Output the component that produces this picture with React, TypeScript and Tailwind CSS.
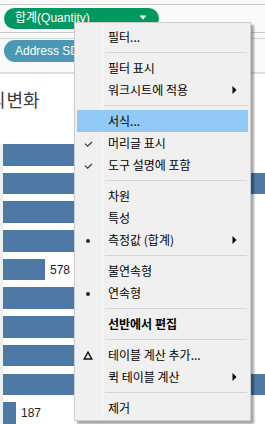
import React from "react";

type Item =
  | { kind: "sep" }
  | {
      kind: "item";
      label: string;
      icon?: "check" | "dot" | "delta";
      sub?: boolean;
      bold?: boolean;
      active?: boolean;
    };

const items: Item[] = [
  { kind: "item", label: "필터..." },
  { kind: "sep" },
  { kind: "item", label: "필터 표시" },
  { kind: "item", label: "워크시트에 적용", sub: true },
  { kind: "sep" },
  { kind: "item", label: "서식...", active: true },
  { kind: "item", label: "머리글 표시", icon: "check" },
  { kind: "item", label: "도구 설명에 포함", icon: "check" },
  { kind: "sep" },
  { kind: "item", label: "차원" },
  { kind: "item", label: "특성" },
  { kind: "item", label: "측정값 (합계)", icon: "dot", sub: true },
  { kind: "sep" },
  { kind: "item", label: "불연속형" },
  { kind: "item", label: "연속형", icon: "dot" },
  { kind: "sep" },
  { kind: "item", label: "선반에서 편집", bold: true },
  { kind: "sep" },
  { kind: "item", label: "테이블 계산 추가...", icon: "delta" },
  { kind: "item", label: "퀵 테이블 계산", sub: true },
  { kind: "sep" },
  { kind: "item", label: "제거" },
];

const bars: { w: number; label?: string }[] = [
  { w: 150 },
  { w: 300 },
  { w: 200 },
  { w: 220 },
  { w: 42, label: "578" },
  { w: 180 },
  { w: 160 },
  { w: 190 },
  { w: 300 },
  { w: 13, label: "187" },
];

function Icon({ kind }: { kind?: "check" | "dot" | "delta" }) {
  if (kind === "check")
    return (
      <svg width="9" height="7" viewBox="0 0 9 7" className="mt-[2px]">
        <path d="M1 2.6 L3.6 5.2 L8 1" fill="none" stroke="#3a3a3a" strokeWidth="1.2" />
      </svg>
    );
  if (kind === "dot")
    return <div className="w-[4px] h-[4px] rounded-full bg-[#2a2a2a] mt-[1px]" />;
  if (kind === "delta")
    return (
      <svg width="10" height="9" viewBox="0 0 10 9">
        <path d="M5 1.2 L8.8 8 L1.2 8 Z" fill="none" stroke="#111" strokeWidth="1.4" strokeLinejoin="miter" />
      </svg>
    );
  return null;
}

export default function App() {
  return (
    <div className="relative w-[265px] h-[424px] overflow-hidden bg-white font-['Liberation_Sans','Noto_Sans_CJK_KR',sans-serif]">
      {/* shelves */}
      <div className="bg-[#fafafa]">
        <div className="h-[4px]" />
        <div className="border-t border-[#c9c9c9] pt-[3px] pb-[3px] pl-[4px] border-b">
          <div className="w-[155px] h-[21px] rounded-full bg-[#019761] flex items-center justify-between pl-[11px] pr-[12px]">
            <span className="text-white text-[12px] leading-[21px] whitespace-nowrap">합계(Quantity)</span>
            <svg width="8" height="5" viewBox="0 0 8 5" className="mb-[3px]">
              <path d="M0.5 0.5 L7.5 0.5 L4 4.5 Z" fill="#fff" />
            </svg>
          </div>
        </div>
        <div className="h-[6px] border-b border-[#d4d4d4]" />
        <div className="pt-[1px] pl-[4px] pb-[10px] border-b-2 border-[#dedede]">
          <div className="w-[130px] h-[22px] rounded-full bg-[#4a98b4] flex items-center pl-[11px]">
            <span className="text-white text-[12px] leading-[22px] whitespace-nowrap">Address SD</span>
          </div>
        </div>
      </div>

      {/* chart */}
      <div className="bg-white">
        <div className="mt-[12px] h-[26px] overflow-hidden">
          <div className="flex text-[18px] leading-[26px] text-[#3b3b3b] whitespace-nowrap font-['Noto_Sans_CJK_KR',sans-serif]">
            <span className="ml-[-11px] mr-[1px]">의</span>
            <span>변화</span>
          </div>
        </div>
        <div className="mt-[32px] border-l-[3px] border-[#efefef] flex flex-col gap-[7.2px]">
          {bars.map((b, i) => (
            <div key={i} className="h-[21.5px] flex items-center">
              <div className="h-full bg-[#4e79a7] shrink-0" style={{ width: b.w }} />
              {b.label && (
                <span className="ml-[5px] text-[12px] text-[#222] leading-none">{b.label}</span>
              )}
            </div>
          ))}
        </div>
      </div>

      {/* context menu */}
      <div className="absolute left-[74px] top-[22px] w-[177px] bg-[#f0f0f0] border border-[#cdcdcd] pt-[3px] pb-[1px] px-[2px] shadow-[3px_3px_2px_rgba(0,0,0,0.35)] font-['Noto_Sans_CJK_KR',sans-serif]">
        <div className="absolute left-[27px] top-0 bottom-0 w-px bg-[#fafafa]" />
        {items.map((it, i) =>
          it.kind === "sep" ? (
            <div key={i} className="relative h-[9px] pt-[4px] ml-[28px] mr-[1px]">
              <div className="h-px bg-[#d5d5d5]" />
            </div>
          ) : (
            <div
              key={i}
              className={`relative h-[22px] flex items-center ${it.active ? "bg-[#91c9f7]" : ""}`}
            >
              <div className="w-[31px] shrink-0 flex">
                <div className="w-[22px] flex justify-center items-center">
                  <Icon kind={it.icon} />
                </div>
              </div>
              <span
                className={`flex-1 text-[12px] leading-[22px] text-black whitespace-nowrap ${it.bold ? "font-bold" : ""}`}
              >
                {it.label}
              </span>
              {it.sub && (
                <svg width="5" height="8" viewBox="0 0 5 8" className="mr-[11px]">
                  <path d="M0.5 0 L4.5 4 L0.5 8 Z" fill="#000" />
                </svg>
              )}
            </div>
          )
        )}
      </div>
    </div>
  );
}
